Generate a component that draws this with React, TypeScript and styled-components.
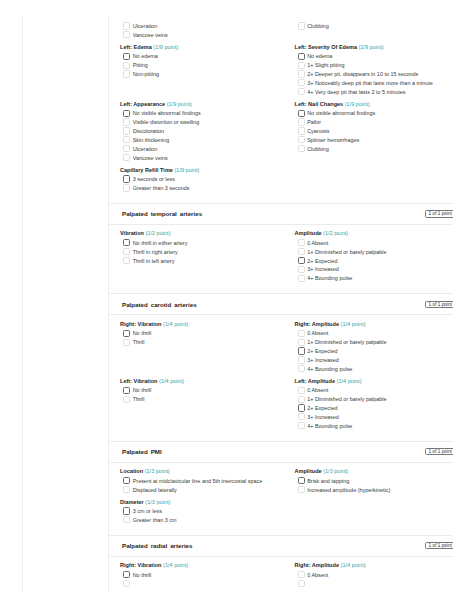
import React from 'react';
import styled, { createGlobalStyle } from 'styled-components';

const GlobalStyle = createGlobalStyle`
  html, body {
    margin: 0;
    padding: 0;
    background: #fff;
  }
  body {
    font-family: 'Liberation Sans', Arial, Helvetica, sans-serif;
  }
`;

const Frame = styled.div`
  display: flex;
  margin: 16px 0 0 22px;
  width: 430px;
  height: 576px;
  overflow: hidden;
  border-left: 1px solid #ededed;
`;

const Sidebar = styled.aside`
  flex-shrink: 0;
  width: 85px;
  border-right: 1px solid #ededed;
`;

const Panel = styled.main`
  flex-shrink: 0;
  width: 360px;
`;

const Section = styled.section<{ $first?: boolean }>`
  border-top: ${({ $first }) => ($first ? 'none' : '1px solid #ebebeb')};
`;

const SectionHeader = styled.header`
  display: flex;
  align-items: center;
  justify-content: space-between;
  height: 20px;
  padding: 0 14px 0 13px;
  border-bottom: 1px solid #ebebeb;
`;

const SectionTitle = styled.h2`
  margin: 0;
  font-size: 6.2px;
  font-weight: 700;
  word-spacing: 1.2px;
  color: #1e1e1e;
`;

const Badge = styled.span`
  display: inline-flex;
  align-items: center;
  height: 5.4px;
  padding: 0 2.2px;
  border: 0.8px solid #777;
  border-radius: 1.5px;
  font-size: 4.7px;
  font-weight: 400;
  color: #2a2a2a;
  white-space: nowrap;
`;

const Body = styled.div<{ $top: number }>`
  padding: ${({ $top }) => $top}px 0 7px 11px;
`;

const Row = styled.div`
  display: grid;
  grid-template-columns: 174.5px 174.5px;
  align-items: start;
`;

const Group = styled.div`
  margin-bottom: 3.5px;
`;

const GroupLabel = styled.div`
  height: 9px;
  line-height: 9px;
  font-size: 5.55px;
  font-weight: 700;
  color: #1e1e1e;
  white-space: nowrap;
`;

const Points = styled.span`
  font-weight: 400;
  color: #36a3a3;
`;

const Option = styled.div`
  display: flex;
  align-items: center;
  height: 8.9px;
  padding-left: 3px;
  font-size: 5.45px;
  color: #3a3a3a;
  white-space: nowrap;
`;

const Box = styled.span<{ $marked?: boolean }>`
  flex-shrink: 0;
  box-sizing: border-box;
  width: 7.2px;
  height: 7.2px;
  margin-right: 2.5px;
  border: ${({ $marked }) => ($marked ? '0.8px solid #666' : '0.7px solid #dedede')};
  border-radius: 1.6px;
  background: #fff;
`;

type Choice = { text: string; marked?: boolean };
type Question = { label?: string; points?: string; choices: Choice[] };
type Block = { title?: string; badge?: string; rows: Question[][] };

const c = (text: string, marked = false): Choice => ({ text, marked });

const amplitude = [
  c('0 Absent'),
  c('1+ Diminished or barely palpable'),
  c('2+ Expected', true),
  c('3+ Increased'),
  c('4+ Bounding pulse'),
];

const blocks: Block[] = [
  {
    rows: [
      [{ choices: [c('Ulceration'), c('Varicose veins')] }, { choices: [c('Clubbing')] }],
      [
        {
          label: 'Left: Edema',
          points: '1/9 point',
          choices: [c('No edema', true), c('Pitting'), c('Non-pitting')],
        },
        {
          label: 'Left: Severity Of Edema',
          points: '1/9 point',
          choices: [
            c('No edema', true),
            c('1+ Slight pitting'),
            c('2+ Deeper pit, disappears in 10 to 15 seconds'),
            c('3+ Noticeably deep pit that lasts more than a minute'),
            c('4+ Very deep pit that lasts 2 to 5 minutes'),
          ],
        },
      ],
      [
        {
          label: 'Left: Appearance',
          points: '1/9 point',
          choices: [
            c('No visible abnormal findings', true),
            c('Visible distortion or swelling'),
            c('Discoloration'),
            c('Skin thickening'),
            c('Ulceration'),
            c('Varicose veins'),
          ],
        },
        {
          label: 'Left: Nail Changes',
          points: '1/9 point',
          choices: [
            c('No visible abnormal findings', true),
            c('Pallor'),
            c('Cyanosis'),
            c('Splinter hemorrhages'),
            c('Clubbing'),
          ],
        },
      ],
      [
        {
          label: 'Capillary Refill Time',
          points: '1/9 point',
          choices: [c('3 seconds or less', true), c('Greater than 3 seconds')],
        },
      ],
    ],
  },
  {
    title: 'Palpated temporal arteries',
    badge: '1 of 1 point',
    rows: [
      [
        {
          label: 'Vibration',
          points: '1/2 point',
          choices: [c('No thrill in either artery', true), c('Thrill in right artery'), c('Thrill in left artery')],
        },
        { label: 'Amplitude', points: '1/2 point', choices: amplitude },
      ],
    ],
  },
  {
    title: 'Palpated carotid arteries',
    badge: '1 of 1 point',
    rows: [
      [
        { label: 'Right: Vibration', points: '1/4 point', choices: [c('No thrill', true), c('Thrill')] },
        { label: 'Right: Amplitude', points: '1/4 point', choices: amplitude },
      ],
      [
        { label: 'Left: Vibration', points: '1/4 point', choices: [c('No thrill', true), c('Thrill')] },
        { label: 'Left: Amplitude', points: '1/4 point', choices: amplitude },
      ],
    ],
  },
  {
    title: 'Palpated PMI',
    badge: '1 of 1 point',
    rows: [
      [
        {
          label: 'Location',
          points: '1/3 point',
          choices: [c('Present at midclavicular line and 5th intercostal space', true), c('Displaced laterally')],
        },
        {
          label: 'Amplitude',
          points: '1/3 point',
          choices: [c('Brisk and tapping', true), c('Increased amplitude (hyperkinetic)')],
        },
      ],
      [
        {
          label: 'Diameter',
          points: '1/3  point',
          choices: [c('3 cm or less', true), c('Greater than 3 cm')],
        },
      ],
    ],
  },
  {
    title: 'Palpated radial arteries',
    badge: '1 of 1 point',
    rows: [
      [
        { label: 'Right: Vibration', points: '1/4 point', choices: [c('No thrill', true), c('')] },
        { label: 'Right: Amplitude', points: '1/4 point', choices: [c('0 Absent'), c('')] },
      ],
    ],
  },
];

function QuestionGroup({ q }: { q: Question }) {
  return (
    <Group>
      {q.label && (
        <GroupLabel>
          {q.label} <Points>({q.points})</Points>
        </GroupLabel>
      )}
      {q.choices.map((choice, i) => (
        <Option key={i}>
          <Box $marked={choice.marked} />
          {choice.text}
        </Option>
      ))}
    </Group>
  );
}

export default function App() {
  return (
    <>
      <GlobalStyle />
      <Frame>
        <Sidebar />
        <Panel>
          {blocks.map((block, i) => (
            <Section key={i} $first={i === 0}>
              {block.title && (
                <SectionHeader>
                  <SectionTitle>{block.title}</SectionTitle>
                  <Badge>{block.badge}</Badge>
                </SectionHeader>
              )}
              <Body $top={block.title ? 4.5 : 5.5}>
                {block.rows.map((row, r) => (
                  <Row key={r}>
                    {row.map((q, k) => (
                      <QuestionGroup key={k} q={q} />
                    ))}
                  </Row>
                ))}
              </Body>
            </Section>
          ))}
        </Panel>
      </Frame>
    </>
  );
}
